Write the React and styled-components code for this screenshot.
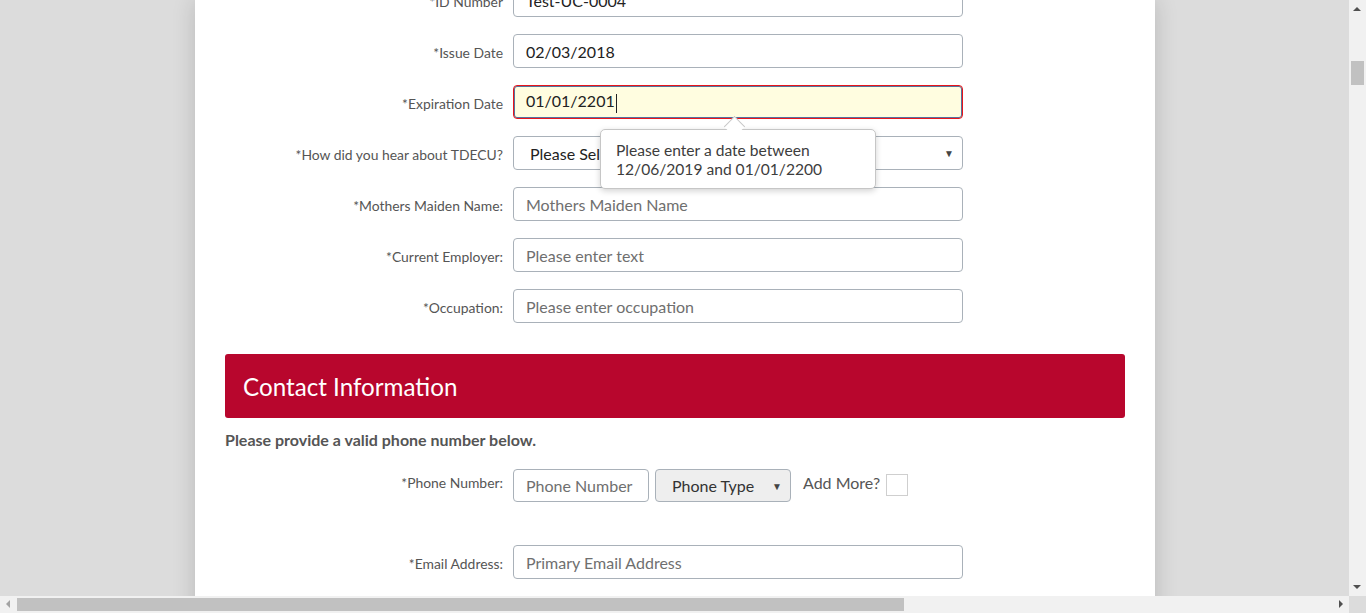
import React from "react";
import styled, { createGlobalStyle } from "styled-components";

const Global = createGlobalStyle`
  html, body { margin: 0; padding: 0; overflow: hidden; }
  body { background: #dcdcdc; font-family: Lato, "Open Sans", sans-serif; }
  * { box-sizing: border-box; }
`;

const Viewport = styled.div`
  width: 1349px;
  height: 596px;
  overflow: hidden;
  background: #dcdcdc;
  display: flex;
  justify-content: flex-start;
  padding-left: 195px;
`;

const Panel = styled.div`
  width: 960px;
  min-height: 700px;
  background: #fff;
  box-shadow: 0 0 22px rgba(0, 0, 0, 0.16);
  padding: 0 30px;
  display: flex;
  flex-direction: column;
`;

const Form = styled.div`
  margin-top: -17px;
  display: flex;
  flex-direction: column;
  gap: 17px;
`;

const Row = styled.div`
  display: grid;
  grid-template-columns: 278px auto;
  column-gap: 10px;
  align-items: center;
  position: relative;
`;

const Label = styled.label`
  text-align: right;
  font-size: 13.9px;
  color: #555;
  padding-top: 2px;
  ${(p) => (p.$top ? "align-self: start; padding-top: 5px; line-height: 17px;" : "")}
`;

const Input = styled.div`
  width: ${(p) => p.$w || 450}px;
  height: ${(p) => p.$h || 34}px;
  border: 1px solid ${(p) => (p.$error ? "#e8151b" : "#a9b1b9")};
  box-shadow: ${(p) => (p.$error ? "inset 0 0 0 1px #56749f" : "none")};
  background: ${(p) => (p.$error ? "#fffde0" : p.$grey ? "#eeeeee" : "#fff")};
  border-radius: 4px;
  display: flex;
  align-items: center;
  justify-content: space-between;
  padding: 0 12px;
  font-size: 16px;
  color: ${(p) => (p.$placeholder ? "#6f6f6f" : "#222")};
`;

const Caret = styled.span`
  display: inline-block;
  width: 1px;
  height: 19px;
  background: #222;
  margin-left: 1px;
  vertical-align: middle;
`;

const Arrow = styled.span`
  font-size: 10px;
  color: #444;
  margin-right: -4px;
`;

const Tooltip = styled.div`
  position: absolute;
  left: 375px;
  top: 44px;
  width: 276px;
  height: 60px;
  background: #fff;
  border: 1px solid #c6c6c6;
  border-radius: 5px;
  box-shadow: 0 2px 6px rgba(0, 0, 0, 0.18);
  padding: 11px 15px;
  font-size: 15.6px;
  line-height: 19px;
  color: #3d3d3d;
  z-index: 5;
  &::before {
    content: "";
    position: absolute;
    left: 126px;
    top: -11px;
    width: 14px;
    height: 14px;
    background: #fff;
    border-left: 1px solid #c6c6c6;
    border-top: 1px solid #c6c6c6;
    transform: rotate(45deg);
  }
`;

const SectionHeader = styled.div`
  margin-top: 31px;
  height: 64px;
  background: #b8062d;
  border-radius: 3px;
  color: #fff;
  font-size: 24.2px;
  display: flex;
  align-items: center;
  padding-left: 18px;
`;

const Note = styled.p`
  margin: 12px 0 0;
  font-size: 16px;
  font-weight: 700;
  color: #555;
`;

const PhoneRow = styled(Row)`
  margin-top: 20px;
`;

const Inline = styled.div`
  display: flex;
  align-items: center;
  gap: 6px;
`;

const AddMore = styled.span`
  align-self: flex-start;
  margin: 4px 0 0 6px;
  font-size: 16px;
  line-height: 20px;
  color: #555;
  display: flex;
  align-items: flex-start;
  gap: 6px;
`;

const Check = styled.span`
  width: 22px;
  height: 22px;
  border: 1px solid #cfcfcf;
  background: #fff;
  margin-top: 1px;
`;

const EmailRow = styled(Row)`
  margin-top: 43px;
`;

const VScroll = styled.div`
  position: fixed;
  right: 0;
  top: 0;
  width: 17px;
  height: 596px;
  background: #f1f1f1;
`;

const HScroll = styled.div`
  position: fixed;
  left: 0;
  bottom: 0;
  width: 1349px;
  height: 17px;
  background: #f1f1f1;
`;

const Corner = styled.div`
  position: fixed;
  right: 0;
  bottom: 0;
  width: 17px;
  height: 17px;
  background: #dcdcdc;
`;

const Thumb = styled.div`
  position: absolute;
  background: #c1c1c1;
`;

const Tri = styled.div`
  position: absolute;
  width: 0;
  height: 0;
  border: 4px solid transparent;
  ${(p) =>
    p.$dir === "up"
      ? "border-bottom-color:#505050; border-top-width:0; left:4px; top:7px;"
      : p.$dir === "down"
      ? "border-top-color:#505050; border-bottom-width:0; left:4px; bottom:7px;"
      : p.$dir === "left"
      ? "border-right-color:#a3a3a3; border-left-width:0; left:6px; top:4px;"
      : "border-left-color:#505050; border-right-width:0; right:6px; top:4px;"}
`;

export default function App() {
  return (
    <>
      <Global />
      <Viewport>
        <Panel>
          <Form>
            <Row>
              <Label>*ID Number</Label>
              <Input>Test-UC-0004</Input>
            </Row>
            <Row>
              <Label>*Issue Date</Label>
              <Input>02/03/2018</Input>
            </Row>
            <Row>
              <Label>*Expiration Date</Label>
              <Input $error>
                <span>
                  01/01/2201
                  <Caret />
                </span>
              </Input>
              <Tooltip>
                Please enter a date between
                <br />
                12/06/2019 and 01/01/2200
              </Tooltip>
            </Row>
            <Row>
              <Label>*How did you hear about TDECU?</Label>
              <Input>
                <span style={{ paddingLeft: 4 }}>Please Select</span>
                <Arrow>▼</Arrow>
              </Input>
            </Row>
            <Row>
              <Label>*Mothers Maiden Name:</Label>
              <Input $placeholder>Mothers Maiden Name</Input>
            </Row>
            <Row>
              <Label>*Current Employer:</Label>
              <Input $placeholder>Please enter text</Input>
            </Row>
            <Row>
              <Label>*Occupation:</Label>
              <Input $placeholder>Please enter occupation</Input>
            </Row>
          </Form>
          <SectionHeader>Contact Information</SectionHeader>
          <Note>Please provide a valid phone number below.</Note>
          <PhoneRow>
            <Label $top>*Phone Number:</Label>
            <Inline>
              <Input $w={136} $h={33} $placeholder>
                Phone Number
              </Input>
              <Input $w={136} $h={33} $grey>
                <span style={{ paddingLeft: 4, color: "#333" }}>Phone Type</span>
                <Arrow>▼</Arrow>
              </Input>
              <AddMore>
                Add More?
                <Check />
              </AddMore>
            </Inline>
          </PhoneRow>
          <EmailRow>
            <Label>*Email Address:</Label>
            <Input $placeholder>Primary Email Address</Input>
          </EmailRow>
        </Panel>
      </Viewport>
      <VScroll>
        <Tri $dir="up" />
        <Thumb style={{ left: 2, top: 61, width: 13, height: 24 }} />
        <Tri $dir="down" />
      </VScroll>
      <HScroll>
        <Tri $dir="left" />
        <Thumb style={{ left: 17, top: 2, width: 887, height: 13 }} />
        <Tri $dir="right" />
      </HScroll>
      <Corner />
    </>
  );
}
